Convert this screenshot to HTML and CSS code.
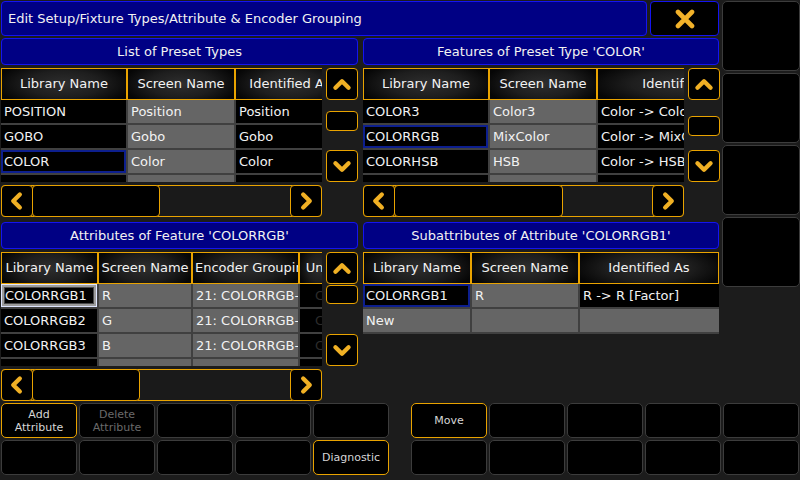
FILE: index.html
```html
<!DOCTYPE html>
<html>
<head>
<meta charset="utf-8">
<link rel="stylesheet" href="styles.css">
</head>
<body>
<div class="screen">
  <div class="upper">
    <div class="main">
      <div class="titlerow">
        <div class="title">Edit Setup/Fixture Types/Attribute &amp; Encoder Grouping</div>
        <div class="close">
          <svg width="20" height="20" viewBox="0 0 20 20"><path d="M3 3L17 17M17 3L3 17" stroke="#f2b22a" stroke-width="4.6" stroke-linecap="round" fill="none"/></svg>
        </div>
      </div>
      <div class="panels">
        <!-- Top left -->
        <div class="panel">
          <div class="phead">List of Preset Types</div>
          <div class="tarea">
            <div class="tbl">
              <div class="thead t1h">
                <div class="th">Library Name</div><div class="th">Screen Name</div><div class="th">Identified As</div>
              </div>
              <div class="tbody t1b">
                <div class="td">POSITION</div><div class="td g">Position</div><div class="td">Position</div>
                <div class="td">GOBO</div><div class="td g">Gobo</div><div class="td">Gobo</div>
                <div class="td sel">COLOR</div><div class="td g">Color</div><div class="td">Color</div>
                <div class="td"></div><div class="td g"></div><div class="td"></div>
              </div>
            </div>
            <div class="vscroll">
              <div class="abtn"><svg width="32" height="32" viewBox="0 0 32 32"><polyline points="9,20 16,13 23,20" class="chev"/></svg></div>
              <div class="track"><div class="vthumb" style="margin-top:11px;height:20px"></div></div>
              <div class="abtn"><svg width="32" height="32" viewBox="0 0 32 32"><polyline points="9,13 16,20 23,13" class="chev"/></svg></div>
            </div>
          </div>
          <div class="hscroll">
            <div class="hbtn"><svg width="32" height="32" viewBox="0 0 32 32"><polyline points="19,9 12,16 19,23" class="chev"/></svg></div>
            <div class="hthumb" style="width:128px"></div>
            <div class="hspace"></div>
            <div class="hbtn"><svg width="32" height="32" viewBox="0 0 32 32"><polyline points="13,9 20,16 13,23" class="chev"/></svg></div>
          </div>
        </div>
        <!-- Top right -->
        <div class="panel">
          <div class="phead">Features of Preset Type 'COLOR'</div>
          <div class="tarea">
            <div class="tbl">
              <div class="thead t2h">
                <div class="th">Library Name</div><div class="th">Screen Name</div><div class="th">Identified As</div>
              </div>
              <div class="tbody t2b">
                <div class="td">COLOR3</div><div class="td g">Color3</div><div class="td">Color -&gt; Color3</div>
                <div class="td sel">COLORRGB</div><div class="td g">MixColor</div><div class="td">Color -&gt; MixColor</div>
                <div class="td">COLORHSB</div><div class="td g">HSB</div><div class="td">Color -&gt; HSB</div>
                <div class="td"></div><div class="td g"></div><div class="td"></div>
              </div>
            </div>
            <div class="vscroll">
              <div class="abtn"><svg width="32" height="32" viewBox="0 0 32 32"><polyline points="9,20 16,13 23,20" class="chev"/></svg></div>
              <div class="track"><div class="vthumb" style="margin-top:16px;height:20px"></div></div>
              <div class="abtn"><svg width="32" height="32" viewBox="0 0 32 32"><polyline points="9,13 16,20 23,13" class="chev"/></svg></div>
            </div>
          </div>
          <div class="hscroll">
            <div class="hbtn"><svg width="32" height="32" viewBox="0 0 32 32"><polyline points="19,9 12,16 19,23" class="chev"/></svg></div>
            <div class="hthumb" style="width:169px"></div>
            <div class="hspace"></div>
            <div class="hbtn"><svg width="32" height="32" viewBox="0 0 32 32"><polyline points="13,9 20,16 13,23" class="chev"/></svg></div>
          </div>
        </div>
        <!-- Bottom left -->
        <div class="panel">
          <div class="phead">Attributes of Feature 'COLORRGB'</div>
          <div class="tarea">
            <div class="tbl">
              <div class="thead t3h">
                <div class="th">Library Name</div><div class="th">Screen Name</div><div class="th">Encoder Grouping</div><div class="th">Unit</div>
              </div>
              <div class="tbody t3b">
                <div class="td edit">COLORRGB1</div><div class="td g">R</div><div class="td g">21: COLORRGB-RGB</div><div class="td dim">C</div>
                <div class="td">COLORRGB2</div><div class="td g">G</div><div class="td g">21: COLORRGB-RGB</div><div class="td dim">C</div>
                <div class="td">COLORRGB3</div><div class="td g">B</div><div class="td g">21: COLORRGB-RGB</div><div class="td dim">C</div>
                <div class="td"></div><div class="td g"></div><div class="td g"></div><div class="td"></div>
              </div>
            </div>
            <div class="vscroll">
              <div class="abtn"><svg width="32" height="32" viewBox="0 0 32 32"><polyline points="9,20 16,13 23,20" class="chev"/></svg></div>
              <div class="track"><div class="vthumb" style="margin-top:1px;height:19px"></div></div>
              <div class="abtn"><svg width="32" height="32" viewBox="0 0 32 32"><polyline points="9,13 16,20 23,13" class="chev"/></svg></div>
            </div>
          </div>
          <div class="hscroll">
            <div class="hbtn"><svg width="32" height="32" viewBox="0 0 32 32"><polyline points="19,9 12,16 19,23" class="chev"/></svg></div>
            <div class="hthumb" style="width:108px"></div>
            <div class="hspace"></div>
            <div class="hbtn"><svg width="32" height="32" viewBox="0 0 32 32"><polyline points="13,9 20,16 13,23" class="chev"/></svg></div>
          </div>
        </div>
        <!-- Bottom right -->
        <div class="panel">
          <div class="phead">Subattributes of Attribute 'COLORRGB1'</div>
          <div class="tbl auto">
            <div class="thead t4h">
              <div class="th">Library Name</div><div class="th">Screen Name</div><div class="th">Identified As</div>
            </div>
            <div class="tbody t4b">
              <div class="td sel">COLORRGB1</div><div class="td g">R</div><div class="td">R -&gt; R [Factor]</div>
              <div class="td g">New</div><div class="td g"></div><div class="td g"></div>
            </div>
          </div>
        </div>
      </div>
    </div>
    <div class="side">
      <div class="tile"></div>
      <div class="tile"></div>
      <div class="tile"></div>
      <div class="tile"></div>
    </div>
  </div>
  <div class="buttons">
    <div class="bgroup">
      <div class="btn on">Add<br>Attribute</div>
      <div class="btn off">Delete<br>Attribute</div>
      <div class="btn"></div>
      <div class="btn"></div>
      <div class="btn"></div>
      <div class="btn"></div>
      <div class="btn"></div>
      <div class="btn"></div>
      <div class="btn"></div>
      <div class="btn on">Diagnostic</div>
    </div>
    <div class="bgroup">
      <div class="btn on">Move</div>
      <div class="btn"></div>
      <div class="btn"></div>
      <div class="btn"></div>
      <div class="btn"></div>
      <div class="btn"></div>
      <div class="btn"></div>
      <div class="btn"></div>
      <div class="btn"></div>
      <div class="btn"></div>
    </div>
  </div>
</div>
</body>
</html>
```
FILE: styles.css
```css
* { box-sizing: border-box; }
html, body { margin: 0; padding: 0; }
body {
  width: 800px;
  height: 480px;
  overflow: hidden;
  background: #1c1c1c;
  font-family: "DejaVu Sans", sans-serif;
  font-size: 13px;
  color: #f2f2f2;
}
.screen { display: grid; grid-template-rows: 402px 78px; }
.upper { display: grid; grid-template-columns: 721px 79px; }
.main { padding: 1px 0 0 1px; display: flex; flex-direction: column; gap: 2px; }

.titlerow { display: flex; gap: 3px; height: 35px; }
.title {
  width: 646px;
  background: #000084;
  border: 1px solid #1414f0;
  border-radius: 4px;
  padding-left: 6px;
  display: flex;
  align-items: center;
  white-space: nowrap;
}
.close {
  width: 69px;
  background: #000;
  border: 1px solid #1414f0;
  border-radius: 4px;
  display: flex;
  align-items: center;
  justify-content: center;
}

.panels {
  display: grid;
  grid-template-columns: 357px 356px;
  grid-template-rows: 179px 179px;
  column-gap: 5px;
  row-gap: 5px;
}
.panel { display: flex; flex-direction: column; gap: 3px; }
.phead {
  height: 27px;
  flex: none;
  background: #000084;
  border: 1px solid #1414f0;
  border-radius: 4px;
  display: flex;
  align-items: center;
  justify-content: center;
  white-space: nowrap;
}
.tarea { display: flex; gap: 4px; height: 114px; flex: none; }

.tbl { width: 321px; height: 114px; overflow: hidden; flex: none; }
.tbl.auto { width: 356px; height: auto; }

.thead { display: grid; height: 32px; }
.th {
  border: 1px solid #e9a300;
  background: radial-gradient(ellipse 55% 80% at 50% 50%, #2e2e2e 0%, #1e1e1e 55%, #060606 100%);
  text-align: center;
  line-height: 30px;
  padding: 0 2px;
  white-space: nowrap;
  overflow: hidden;
}
.tbody {
  display: grid;
  gap: 2px;
  grid-auto-rows: 23px;
  background: #404040;
  padding-bottom: 2px;
}
.td {
  background: #000;
  padding-left: 3px;
  line-height: 23px;
  white-space: nowrap;
  overflow: hidden;
}
.td.g { background: #656565; }
.td.sel { box-shadow: inset 0 0 0 2px #0d1f8e; }
.td.edit {
  border: 1px solid #dfe6ff;
  box-shadow: inset 0 0 0 2px #9c9c9c, inset 0 0 0 3px #4a4a4a;
  padding-left: 3px;
  line-height: 21px;
}
.td.dim { color: #2c2c2c; padding-left: 15px; }

.t1h { grid-template-columns: 126px 108px 110px; }
.t1b { grid-template-columns: 125px 106px 108px; }
.t2h { grid-template-columns: 126px 108px 172px; }
.t2b { grid-template-columns: 125px 106px 170px; }
.t3h { grid-template-columns: 97px 94px 107px 40px; }
.t3b { grid-template-columns: 96px 92px 105px 40px; }
.t4h { grid-template-columns: 108px 108px 140px; }
.t4b { grid-template-columns: 107px 106px 139px; }

.vscroll { width: 32px; display: flex; flex-direction: column; }
.abtn {
  height: 32px;
  flex: none;
  background: #000;
  border: 1px solid #e9a300;
  border-radius: 4px;
  display: flex;
  align-items: center;
  justify-content: center;
}
.abtn svg, .hbtn svg { display: block; }
.track { flex: 1; }
.vthumb { background: #000; border: 1px solid #e9a300; border-radius: 4px; }
.chev {
  fill: none;
  stroke: #f0b024;
  stroke-width: 4.6;
  stroke-linecap: round;
  stroke-linejoin: round;
}

.hscroll {
  width: 321px;
  height: 32px;
  flex: none;
  display: flex;
  border: 1px solid #e9a300;
  border-radius: 4px;
  background: #1a1a1a;
}
.hbtn {
  width: 32px;
  flex: none;
  background: #000;
  border: 1px solid #e9a300;
  border-radius: 4px;
  margin: -1px;
  display: flex;
  align-items: center;
  justify-content: center;
}
.hthumb {
  flex: none;
  background: #000;
  border: 1px solid #e9a300;
  border-radius: 4px;
  margin: -1px 0;
}
.hspace { flex: 1; }

.side { padding: 1px 0 0 1px; display: flex; flex-direction: column; gap: 2px; }
.tile {
  height: 70px;
  background: #000;
  border: 1px solid #3c3c3c;
  border-radius: 5px;
}

.buttons {
  padding: 1px 1px 0 1px;
  display: flex;
  justify-content: space-between;
}
.bgroup {
  display: grid;
  grid-template-columns: repeat(5, 76px);
  grid-template-rows: 35px 35px;
  column-gap: 2px;
  row-gap: 2px;
}
.btn {
  background: #000;
  border: 1px solid #3c3c3c;
  border-radius: 5px;
  display: flex;
  align-items: center;
  justify-content: center;
  text-align: center;
  font-size: 11px;
  line-height: 13px;
  color: #d6d6d6;
}
.btn.on { border-color: #e9a300; }
.btn.off { color: #6a6a6a; }
```
